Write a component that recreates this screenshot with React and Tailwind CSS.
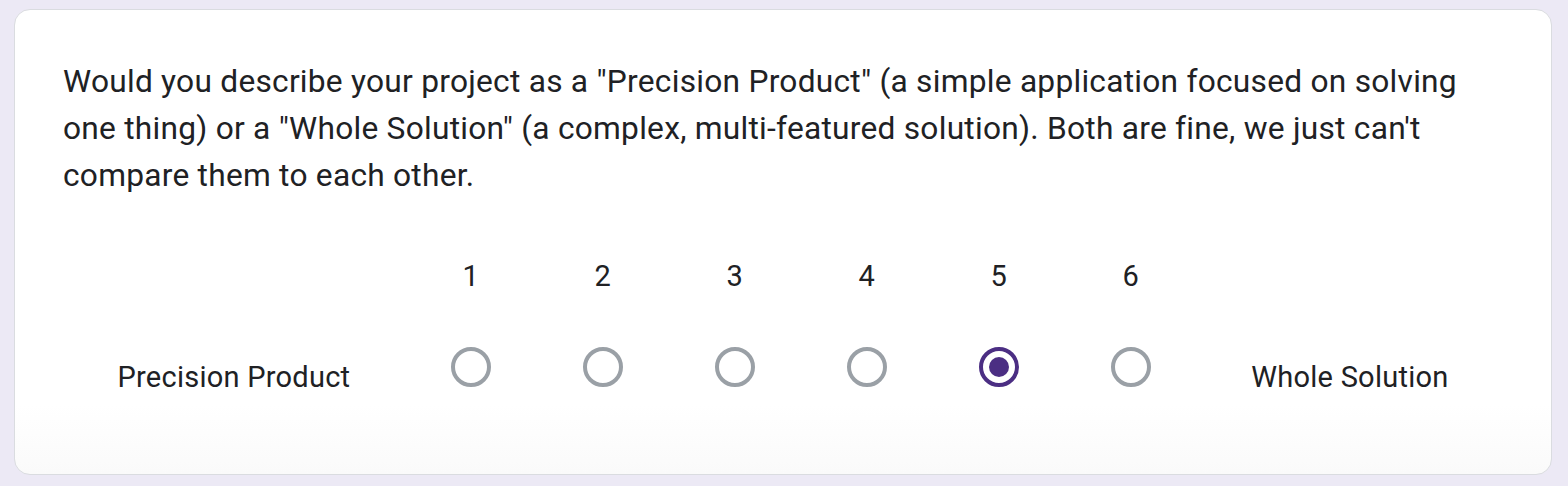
import React, { useState } from 'react';

const Radio = ({ checked, onClick }) => (
  <button
    type="button"
    onClick={onClick}
    className={`flex h-[40px] w-[40px] items-center justify-center rounded-full border-[4px] ${
      checked ? 'border-[#4b2e83]' : 'border-[#9aa0a6]'
    }`}
  >
    {checked && <span className="h-[20px] w-[20px] rounded-full bg-[#4b2e83]" />}
  </button>
);

const App = () => {
  const [value, setValue] = useState(5);
  const options = [1, 2, 3, 4, 5, 6];

  return (
    <div
      className="min-h-[486px] bg-[#ece9f5] pl-[14px] pr-[16px] pt-[9px]"
      style={{ fontFamily: 'Roboto, "Noto Sans", sans-serif' }}
    >
      <div className="rounded-[16px] border border-[#dadce0] bg-gradient-to-b from-white from-85% to-[#fafafa] px-[48px] pb-[73px] pt-[48px] text-[#202124]">
        <div className="text-[31.7px] leading-[47px] tracking-[0.25px]">
          Would you describe your project as a "Precision Product" (a simple application focused on solving one
          thing) or a "Whole Solution" (a complex, multi-featured solution). Both are fine, we just can't compare
          them to each other.
        </div>

        <div className="mt-[53px] flex items-end text-[29px] tracking-[0.25px]">
          <div className="flex-auto text-center leading-[48px]">Precision Product</div>
          {options.map((n) => (
            <div key={n} className="flex w-[132px] flex-col items-center pb-[14px]">
              <div className="leading-[48px]">{n}</div>
              <div className="mt-[47px]">
                <Radio checked={value === n} onClick={() => setValue(n)} />
              </div>
            </div>
          ))}
          <div className="flex-auto text-center leading-[48px]">Whole Solution</div>
        </div>
      </div>
    </div>
  );
};

export default App;
